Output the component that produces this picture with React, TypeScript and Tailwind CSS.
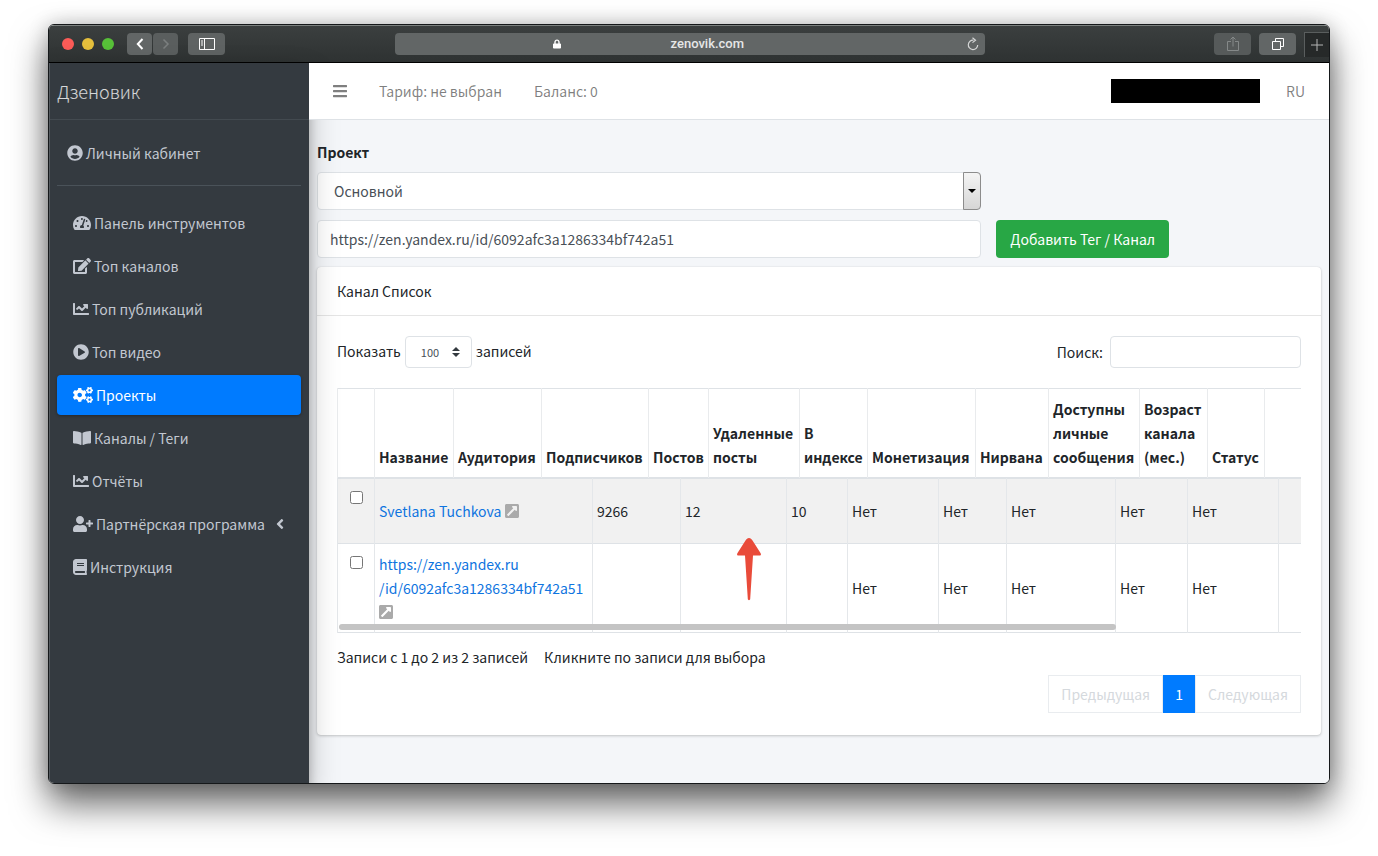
import { useState } from "react";
import type { ComponentType } from "react";
import {
    FaAngleLeft,
    FaBars,
    FaBook,
    FaBookOpen,
    FaChartLine,
    FaCogs,
    FaEdit,
    FaExternalLinkSquareAlt,
    FaLock,
    FaPlayCircle,
    FaTachometerAlt,
    FaUserCircle,
    FaUserPlus,
} from "react-icons/fa";

type NavItem = {
    label: string;
    icon: ComponentType<{ className?: string }>;
    iconClass: string;
    hasChildren?: boolean;
};

type Channel = {
    id: number;
    name: string[];
    cells: string[];
};

const navItems: NavItem[] = [
    { label: "Панель инструментов", icon: FaTachometerAlt, iconClass: "w-[18px]" },
    { label: "Топ каналов", icon: FaEdit, iconClass: "w-[18px]" },
    { label: "Топ публикаций", icon: FaChartLine, iconClass: "w-4" },
    { label: "Топ видео", icon: FaPlayCircle, iconClass: "w-4" },
    { label: "Проекты", icon: FaCogs, iconClass: "w-5" },
    { label: "Каналы / Теги", icon: FaBookOpen, iconClass: "w-[18px]" },
    { label: "Отчёты", icon: FaChartLine, iconClass: "w-4" },
    { label: "Партнёрская программа", icon: FaUserPlus, iconClass: "w-5", hasChildren: true },
    { label: "Инструкция", icon: FaBook, iconClass: "w-[14px]" },
];

const headColumns = [
    { label: "", width: 37 },
    { label: "Название", width: 79 },
    { label: "Аудитория", width: 88 },
    { label: "Подписчиков", width: 107 },
    { label: "Постов", width: 60 },
    { label: "Удаленные посты", width: 91 },
    { label: "В индексе", width: 68 },
    { label: "Монетизация", width: 108 },
    { label: "Нирвана", width: 73 },
    { label: "Доступны личные сообщения", width: 91 },
    { label: "Возраст канала (мес.)", width: 68 },
    { label: "Статус", width: 57 },
    { label: "", width: 120 },
];

const bodyWidths = [37, 218, 88, 106, 61, 91, 68, 109, 72, 91, 106];

const channels: Channel[] = [
    {
        id: 1,
        name: ["Svetlana Tuchkova"],
        cells: ["9266", "12", "10", "Нет", "Нет", "Нет", "Нет", "Нет", ""],
    },
    {
        id: 2,
        name: ["https://zen.yandex.ru", "/id/6092afc3a1286334bf742a51"],
        cells: ["", "", "", "Нет", "Нет", "Нет", "Нет", "Нет", ""],
    },
];

function BrowserBar() {
    return (
        <div className="flex h-[38px] shrink-0 items-center border-t border-b border-t-[#7b807e] border-b-black bg-linear-to-b from-[#3b3f3f] to-[#2e3232] pl-[13px] text-white">
            <div className="flex w-[65px] gap-2">
                <span className="h-3 w-3 rounded-full bg-[#fc5b57]" />
                <span className="h-3 w-3 rounded-full bg-[#e5bf3c]" />
                <span className="h-3 w-3 rounded-full bg-[#57c038]" />
            </div>
            <div className="flex gap-px">
                <button aria-label="Назад" className="flex h-[22px] w-[25px] items-center justify-center rounded-sm bg-[#626666]">
                    <svg viewBox="0 0 8 12" className="h-3 w-2" fill="none" stroke="currentColor" strokeWidth="2">
                        <path d="M6.5 1 1.8 6l4.7 5" />
                    </svg>
                </button>
                <button aria-label="Вперёд" className="flex h-[22px] w-[25px] items-center justify-center rounded-sm bg-[#5a5e5e] text-[#7b7f7f]">
                    <svg viewBox="0 0 8 12" className="h-3 w-2" fill="none" stroke="currentColor" strokeWidth="1.5">
                        <path d="m1.5 1.5 4.5 4.5-4.5 4.5" />
                    </svg>
                </button>
            </div>
            <button aria-label="Боковая панель" className="ml-[10px] flex h-[22px] w-[37px] items-center justify-center rounded-sm bg-[#5f6363]">
                <svg viewBox="0 0 16 12" className="h-3 w-4" fill="none" stroke="currentColor">
                    <path d="M.5.5h15v11H.5zM5.5.5v11M2 3h2M2 5h2M2 7h2" />
                </svg>
            </button>
            <div className="flex flex-1 justify-center pr-[60px]">
                <div className="flex h-[22px] w-full max-w-[590px] items-center rounded-sm bg-[#626666] pr-[6px] pl-[158px] font-[Roboto,sans-serif] text-xs font-medium">
                    <FaLock className="h-[10px] w-2" />
                    <span className="ml-[110px] text-[13px] text-[#e6e7e7]">zenovik.com</span>
                    <svg viewBox="0 0 12 14" className="ml-auto h-[14px] w-3" fill="none" stroke="#d4d6d6" strokeWidth="1.2">
                        <path d="M6.5 3.2A4.7 4.7 0 1 0 10.7 8" />
                        <path d="m5.5.8 3 2.4-3 2.4" />
                    </svg>
                </div>
            </div>
            <div className="flex items-center gap-2">
                <button aria-label="Поделиться" className="flex h-[22px] w-[37px] items-center justify-center rounded-sm bg-[#565a5a] text-[#858989]">
                    <svg viewBox="0 0 12 16" className="h-4 w-3" fill="none" stroke="currentColor">
                        <path d="M4 5.5H.5v9h11v-9H8M6 10.500V1M3.500 3.500 6 1l2.500 2.500" />
                    </svg>
                </button>
                <button aria-label="Вкладки" className="flex h-[22px] w-[37px] items-center justify-center rounded-sm bg-[#626666]">
                    <svg viewBox="0 0 12 12" className="h-3 w-3" fill="none" stroke="currentColor">
                        <path d="M.5 3.500h8v8h-8zM3.500 3.500v-3h8v8h-3" />
                    </svg>
                </button>
                <button aria-label="Новая вкладка" className="flex h-[25px] w-[25px] items-center justify-center self-end border-t border-l border-[#5a5e5e] bg-[#262929] text-[#b3b5b5]">
                    <svg viewBox="0 0 12 12" className="h-3 w-3" stroke="currentColor">
                        <path d="M6 0v12M0 6h12" />
                    </svg>
                </button>
            </div>
        </div>
    );
}

function Sidebar() {
    const [active, setActive] = useState("Проекты");

    return (
        <aside className="relative z-10 w-[260px] shrink-0 border-l border-[#555b60] bg-[#343a40] text-[#c2c7d0] shadow-[0_14px_28px_rgba(0,0,0,0.25),0_10px_10px_rgba(0,0,0,0.22)]">
            <a href="#" className="flex h-[57px] items-center border-b border-[#434a50] pl-[7px] text-lg font-light text-white/80">
                Дзеновик
            </a>
            <div className="pr-2 pl-[7px]">
                <a href="#" className="flex h-[66px] items-center gap-[3px] border-b border-[#4a5259] pl-[10px]">
                    <FaUserCircle className="h-4 w-4" />
                    Личный кабинет
                </a>
                <nav className="mt-[17px] flex flex-col gap-[3px]">
                    {navItems.map((item) => {
                        const Icon = item.icon;
                        return (
                            <a
                                key={item.label}
                                href="#"
                                onClick={() => setActive(item.label)}
                                className={
                                    item.label === active
                                        ? "flex h-10 items-center rounded bg-[#007bff] px-4 text-white shadow-[0_1px_3px_rgba(0,0,0,0.3)]"
                                        : "flex h-10 items-center rounded px-4"
                                }
                            >
                                <Icon className={`h-4 shrink-0 ${item.iconClass}`} />
                                <span className="ml-[3px] flex-1 whitespace-nowrap">{item.label}</span>
                                {item.hasChildren && <FaAngleLeft className="h-4 w-[10px]" />}
                            </a>
                        );
                    })}
                </nav>
            </div>
        </aside>
    );
}

function TopNav() {
    return (
        <header className="relative z-20 flex h-[57px] shrink-0 items-center border-b border-[#dee2e6] bg-white pr-6 pl-6 text-black/50">
            <button aria-label="Меню">
                <FaBars className="h-4 w-[14px]" />
            </button>
            <a href="#" className="ml-8">Тариф: не выбран</a>
            <a href="#" className="ml-8">Баланс: 0</a>
            <span className="ml-auto h-6 w-[149px] bg-black" />
            <a href="#" className="ml-[26px]">RU</a>
        </header>
    );
}

function ProjectForm() {
    return (
        <form onSubmit={(e) => e.preventDefault()}>
            <label htmlFor="project" className="block font-bold">Проект</label>
            <div className="mt-2 grid grid-cols-3 gap-x-[15px] gap-y-[10px]">
                <div className="relative col-span-2">
                    <select id="project" className="h-[38px] w-full appearance-none rounded border border-[#dee2e6] bg-white px-4 text-[#495057]">
                        <option>Основной</option>
                    </select>
                    <span className="pointer-events-none absolute top-0 right-0 flex h-full w-[18px] items-center justify-center rounded-r-sm border border-[#8c8c8c] bg-linear-to-b from-[#f4f4f4] to-[#d6d6d6]">
                        <svg viewBox="0 0 8 4" className="h-1 w-2">
                            <path d="M0 0h8L4 4z" />
                        </svg>
                    </span>
                </div>
                <input
                    aria-label="Адрес канала"
                    defaultValue="https://zen.yandex.ru/id/6092afc3a1286334bf742a51"
                    className="col-span-2 col-start-1 h-[38px] rounded border border-[#dee2e6] bg-white px-3 text-[#495057]"
                />
                <button className="h-[38px] justify-self-start rounded bg-[#28a745] px-[14px] text-white">
                    Добавить Тег / Канал
                </button>
            </div>
        </form>
    );
}

function ChannelTable() {
    return (
        <div className="relative">
            <div className="overflow-hidden">
                <table className="w-[1047px] table-fixed border-collapse">
                    <colgroup>
                        {headColumns.map((col, i) => (
                            <col key={i} style={{ width: col.width }} />
                        ))}
                    </colgroup>
                    <thead>
                        <tr className="h-[89px] border-y border-[#dee2e6]">
                            {headColumns.map((col, i) => (
                                <th key={i} className="border-x border-[#e9ebed] px-1 pb-2 text-left align-bottom font-bold">
                                    {col.label}
                                </th>
                            ))}
                        </tr>
                    </thead>
                </table>
                <table className="w-[1047px] table-fixed border-collapse">
                    <colgroup>
                        {bodyWidths.map((width, i) => (
                            <col key={i} style={{ width }} />
                        ))}
                    </colgroup>
                    <tbody>
                        {channels.map((channel) => (
                            <tr key={channel.id} className="h-[65px] border-y border-[#dee2e6] odd:bg-[#f1f1f1]">
                                <td className="border-x border-[#e4e7ea] pt-3 text-center align-top">
                                    <input type="checkbox" aria-label={channel.name.join("")} className="block mx-auto h-[13px] w-[13px]" />
                                </td>
                                <td className="border-x border-[#e4e7ea] px-1 py-2 whitespace-nowrap">
                                    <a href="#" className="text-[#0f75e0]">
                                        {channel.name.map((line, i) => (
                                            <span key={line}>
                                                {i > 0 && <br />}
                                                {line}
                                            </span>
                                        ))}
                                    </a>
                                    {channel.name.length > 1 ? <br /> : " "}
                                    <FaExternalLinkSquareAlt className="inline h-4 w-[14px] align-[-2px] text-[#aaaaaa]" />
                                </td>
                                {channel.cells.map((cell, i) => (
                                    <td key={i} className="border-x border-[#e4e7ea] px-1">{cell}</td>
                                ))}
                            </tr>
                        ))}
                    </tbody>
                </table>
            </div>
            <span className="absolute right-[185px] bottom-[3px] left-[2px] h-[6px] rounded-full bg-[#c4c4c4]" />
            <svg viewBox="0 0 24 64" className="absolute top-[150px] left-[400px] h-16 w-6" fill="#e94b3a">
                <path d="M12 0c1.500 0 2.500 1 3.500 2.500L23.500 15c.8 1.500.5 2.500-1 2.500h-6.500L13.200 61c-.2 1.500-2.200 1.500-2.400 0L8 17.500H1.500C0 17.500-.3 16.500.5 15L8.500 2.500C9.500 1 10.500 0 12 0z" />
            </svg>
        </div>
    );
}

function ChannelCard() {
    return (
        <section className="mt-[9px] rounded bg-white shadow-[0_0_1px_rgba(0,0,0,0.125),0_1px_3px_rgba(0,0,0,0.2)]">
            <h3 className="flex h-[49px] items-center border-b border-black/10 px-5">Канал Список</h3>
            <div className="px-5 pt-5 pb-[22px]">
                <div className="mb-5 flex h-8 justify-between">
                    <label className="flex h-[30px] items-center gap-1">
                        Показать
                        <span className="relative flex h-8 self-start">
                            <select className="h-8 w-[67px] appearance-none rounded border border-[#dee2e6] bg-white pl-[15px] text-[11px] text-[#495057]">
                                <option>100</option>
                            </select>
                            <svg viewBox="0 0 8 10" className="pointer-events-none absolute top-[11px] right-3 h-[10px] w-2" fill="#343a40">
                                <path d="M4 0 0 4h8zM4 10 0 6h8z" />
                            </svg>
                        </span>
                        записей
                    </label>
                    <label className="flex items-center gap-[7px]">
                        Поиск:
                        <input type="search" className="h-8 w-[191px] rounded border border-[#dee2e6] px-2" />
                    </label>
                </div>
                <ChannelTable />
                <div className="mt-3 flex gap-4">
                    <span>Записи с 1 до 2 из 2 записей</span>
                    <span>Кликните по записи для выбора</span>
                </div>
                <div className="mt-[6px] flex h-[38px] justify-end">
                    <button disabled className="border border-[#e9ecef] px-3 text-[#d5d9dd]">Предыдущая</button>
                    <button className="w-8 bg-[#007bff] text-white">1</button>
                    <button disabled className="border border-[#e9ecef] px-3 text-[#d5d9dd]">Следующая</button>
                </div>
            </div>
        </section>
    );
}

export default function App() {
    return (
        <div className="flex min-h-screen flex-col bg-white px-12 pt-6 pb-[72px] font-['Noto_Sans_CJK_SC','Noto_Sans',sans-serif] text-sm leading-6 text-[#212529]">
            <div className="flex flex-1 flex-col rounded-md shadow-[0_20px_36px_rgba(0,0,0,0.6),0_0_20px_rgba(0,0,0,0.2)]">
                <div className="flex flex-1 flex-col overflow-hidden rounded-md border border-[#15181a]">
                    <BrowserBar />
                    <div className="flex flex-1">
                        <Sidebar />
                        <div className="flex min-w-0 flex-1 flex-col bg-[#f4f6f9]">
                            <TopNav />
                            <main className="px-2 pt-5 pb-8">
                                <ProjectForm />
                                <ChannelCard />
                            </main>
                        </div>
                    </div>
                </div>
            </div>
        </div>
    );
}
